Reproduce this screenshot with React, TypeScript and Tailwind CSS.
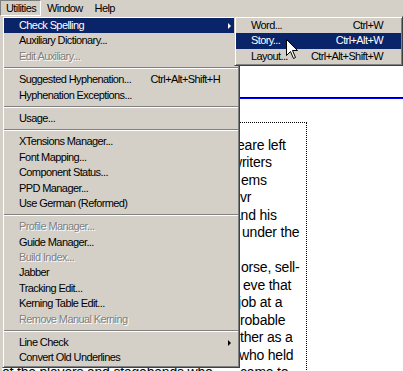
import React from "react";

type Item =
  | { sep: true }
  | {
      sep?: false;
      label: string;
      shortcut?: string;
      sub?: boolean;
      active?: boolean;
      disabled?: boolean;
    };

const mainItems: Item[] = [
  { label: "Check Spelling", sub: true, active: true },
  { label: "Auxiliary Dictionary..." },
  { label: "Edit Auxiliary...", disabled: true },
  { sep: true },
  { label: "Suggested Hyphenation...", shortcut: "Ctrl+Alt+Shift+H" },
  { label: "Hyphenation Exceptions..." },
  { sep: true },
  { label: "Usage..." },
  { sep: true },
  { label: "XTensions Manager..." },
  { label: "Font Mapping..." },
  { label: "Component Status..." },
  { label: "PPD Manager..." },
  { label: "Use German (Reformed)" },
  { sep: true },
  { label: "Profile Manager...", disabled: true },
  { label: "Guide Manager..." },
  { label: "Build Index...", disabled: true },
  { label: "Jabber" },
  { label: "Tracking Edit..." },
  { label: "Kerning Table Edit..." },
  { label: "Remove Manual Kerning", disabled: true },
  { sep: true },
  { label: "Line Check", sub: true },
  { label: "Convert Old Underlines" },
];

const subItems: Item[] = [
  { label: "Word...", shortcut: "Ctrl+W" },
  { label: "Story...", shortcut: "Ctrl+Alt+W", active: true },
  { label: "Layout...", shortcut: "Ctrl+Alt+Shift+W" },
];

// visible tail of each line of the story, the rest sits under the menu
const storyLines = [
  { text: "eare left", pad: "pl-[235px]" },
  { text: "writers", pad: "pl-[230px]" },
  { text: "ems", pad: "pl-[239px]" },
  { text: "vr", pad: "pl-[238px]" },
  { text: "and his", pad: "pl-[231px]" },
  { text: "under the", pad: "pl-[240px]" },
  { text: "\u00a0", pad: "pl-[240px]" },
  { text: "orse, sell-", pad: "pl-[239px]" },
  { text: "eve that", pad: "pl-[241px]" },
  { text: "job at a", pad: "pl-[236px]" },
  { text: "robable", pad: "pl-[238px]" },
  { text: "ther as a", pad: "pl-[238px]" },
  { text: "who held", pad: "pl-[237px]" },
];

function MenuRow({ item }: { item: Item }) {
  if (item.sep) {
    return (
      <div className="py-[3px]">
        <div className="h-px bg-[#808080]" />
        <div className="h-px bg-white" />
      </div>
    );
  }

  const color = item.active
    ? "bg-[#0a246a] text-white"
    : item.disabled
      ? "text-[#808080] [text-shadow:1px_1px_0_#fff]"
      : "text-black";

  return (
    <div
      className={`flex h-[15.4px] items-center pl-[15px] pr-[18px] leading-[15.4px] whitespace-nowrap ${color}`}
    >
      <span className="flex-1">{item.label}</span>
      {item.shortcut && <span>{item.shortcut}</span>}
      {item.sub && (
        <span
          className={`-mr-[11px] h-0 w-0 border-y-[3px] border-l-[3px] border-y-transparent ${
            item.active ? "border-l-white" : "border-l-black"
          }`}
        />
      )}
    </div>
  );
}

function Cursor() {
  return (
    <svg
      className="absolute left-[286px] top-[39px]"
      width="12"
      height="21"
      viewBox="0 0 12 21"
    >
      <path
        d="M0.5 0.5 L0.5 16.5 L4.5 12.5 L7.5 19.5 L9.5 18.5 L6.5 11.5 L11.5 11.5 Z"
        fill="#fff"
        stroke="#000"
        strokeWidth={1}
        strokeLinejoin="miter"
      />
    </svg>
  );
}

export default function App() {
  return (
    <div className="relative h-[371px] w-[403px] overflow-hidden bg-[#d4d0c8] font-['Liberation_Sans',Arial,sans-serif] text-[11px] tracking-[-0.6px] text-black">
      {/* Menu bar */}
      <div className="flex h-[16px] items-stretch leading-[14px]">
        <div className="border border-t-[#808080] border-l-[#808080] border-r-white border-b-white pl-[5px] pr-[4px]">
          Utilities
        </div>
        <div className="px-[6px] pt-px">Window</div>
        <div className="px-[6px] pt-px">Help</div>
      </div>

      {/* Toolbar strip behind the menus */}
      <div className="h-[49px]" />

      {/* Document */}
      <div className="ml-[2px] bg-white tracking-normal">
        <div className="h-[32px]" />
        <div className="h-px bg-black" />
        <div className="h-px bg-[#0000ff]" />
        <div className="h-[22.7px]" />
        <div className="w-[305px] border-t border-r border-dotted border-black pt-[14px] pb-4 text-[14px] leading-[17.5px] tracking-[-0.2px] text-black">
          {storyLines.map((line, i) => (
            <div key={i} className={`whitespace-nowrap ${line.pad}`}>
              {line.text}
            </div>
          ))}
          <div className="flex whitespace-nowrap">
            <span className="w-[238px] overflow-hidden">
              of the players and stagehands who
            </span>
            <span>came to</span>
          </div>
        </div>
      </div>

      {/* Utilities menu */}
      <div className="absolute left-[2px] top-[16px] w-[238px] border border-t-[#d4d0c8] border-l-[#d4d0c8] border-r-[#404040] border-b-[#404040] bg-[#d4d0c8] shadow-[inset_1px_1px_0_#fff,inset_-1px_-1px_0_#808080] p-px">
        {mainItems.map((item, i) => (
          <MenuRow key={i} item={item} />
        ))}
      </div>

      {/* Check Spelling submenu */}
      <div className="absolute left-[234px] top-[16px] w-[169px] border border-t-[#d4d0c8] border-l-[#d4d0c8] border-r-[#404040] border-b-[#404040] bg-[#d4d0c8] shadow-[inset_1px_1px_0_#fff,inset_-1px_-1px_0_#808080] p-px">
        {subItems.map((item, i) => (
          <MenuRow key={i} item={item} />
        ))}
      </div>

      <Cursor />
    </div>
  );
}
